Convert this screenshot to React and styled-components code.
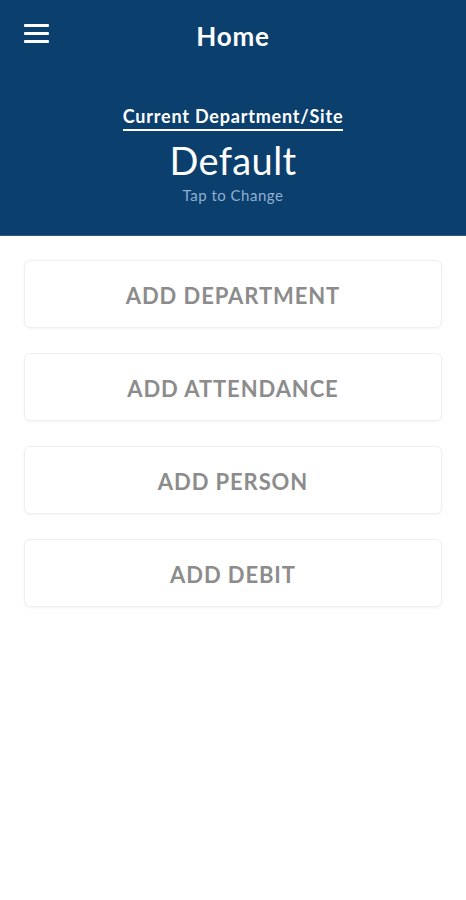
import React from 'react';
import styled, { createGlobalStyle } from 'styled-components';

const GlobalStyle = createGlobalStyle`
  html, body {
    margin: 0;
    padding: 0;
    background: #ffffff;
    font-family: Lato, "Open Sans", sans-serif;
  }
`;

const Page = styled.div`
  width: 466px;
  min-height: 900px;
  background: #ffffff;
`;

const Header = styled.header`
  background: #0b3f6d;
  height: 235px;
  display: flex;
  flex-direction: column;
  align-items: center;
  border-bottom: 1px solid #2b5c86;
`;

const TopBar = styled.div`
  width: 100%;
  height: 72px;
  display: grid;
  grid-template-columns: 72px 1fr 72px;
  align-items: center;
`;

const MenuButton = styled.button`
  background: none;
  border: 0;
  padding: 0 0 0 24px;
  margin: 0 0 6px;
  display: flex;
  flex-direction: column;
  gap: 5px;
  cursor: pointer;

  > span {
    display: block;
    width: 25px;
    height: 3px;
    border-radius: 1px;
    background: #ffffff;
  }
`;

const Title = styled.h1`
  margin: 0;
  text-align: center;
  color: #ffffff;
  font-size: 26px;
  font-weight: 700;
  letter-spacing: 0.8px;
  line-height: 1;
`;

const SiteBlock = styled.div`
  display: flex;
  flex-direction: column;
  align-items: center;
  margin-top: 33px;
  cursor: pointer;
`;

const SiteLabel = styled.span`
  color: #ffffff;
  font-size: 18px;
  font-weight: 700;
  letter-spacing: 0.8px;
  line-height: 22px;
  padding-bottom: 2px;
  border-bottom: 2px solid #ffffff;
`;

const SiteName = styled.span`
  color: #ffffff;
  font-size: 38px;
  font-weight: 400;
  letter-spacing: 0.4px;
  line-height: 44px;
  margin-top: 7px;
`;

const SiteHint = styled.span`
  color: #8fb0d2;
  font-size: 15px;
  letter-spacing: 0.5px;
  line-height: 18px;
  margin-top: 4px;
`;

const Actions = styled.main`
  display: flex;
  flex-direction: column;
  gap: 25px;
  padding: 24px 24px;
`;

const ActionButton = styled.button`
  height: 68px;
  padding: 3px 0 0;
  background: #ffffff;
  border: 1px solid #efefef;
  border-radius: 6px;
  box-shadow: 0 1px 3px rgba(0, 0, 0, 0.05);
  color: #8c8c8c;
  font-family: Lato, "Open Sans", sans-serif;
  font-size: 22px;
  font-weight: 700;
  letter-spacing: 0.9px;
  cursor: pointer;
`;

const actions = ['ADD DEPARTMENT', 'ADD ATTENDANCE', 'ADD PERSON', 'ADD DEBIT'];

export default function App() {
  return (
    <Page>
      <GlobalStyle />
      <Header>
        <TopBar>
          <MenuButton aria-label="Menu">
            <span />
            <span />
            <span />
          </MenuButton>
          <Title>Home</Title>
          <div />
        </TopBar>
        <SiteBlock>
          <SiteLabel>Current Department/Site</SiteLabel>
          <SiteName>Default</SiteName>
          <SiteHint>Tap to Change</SiteHint>
        </SiteBlock>
      </Header>
      <Actions>
        {actions.map(label => (
          <ActionButton key={label}>{label}</ActionButton>
        ))}
      </Actions>
    </Page>
  );
}
